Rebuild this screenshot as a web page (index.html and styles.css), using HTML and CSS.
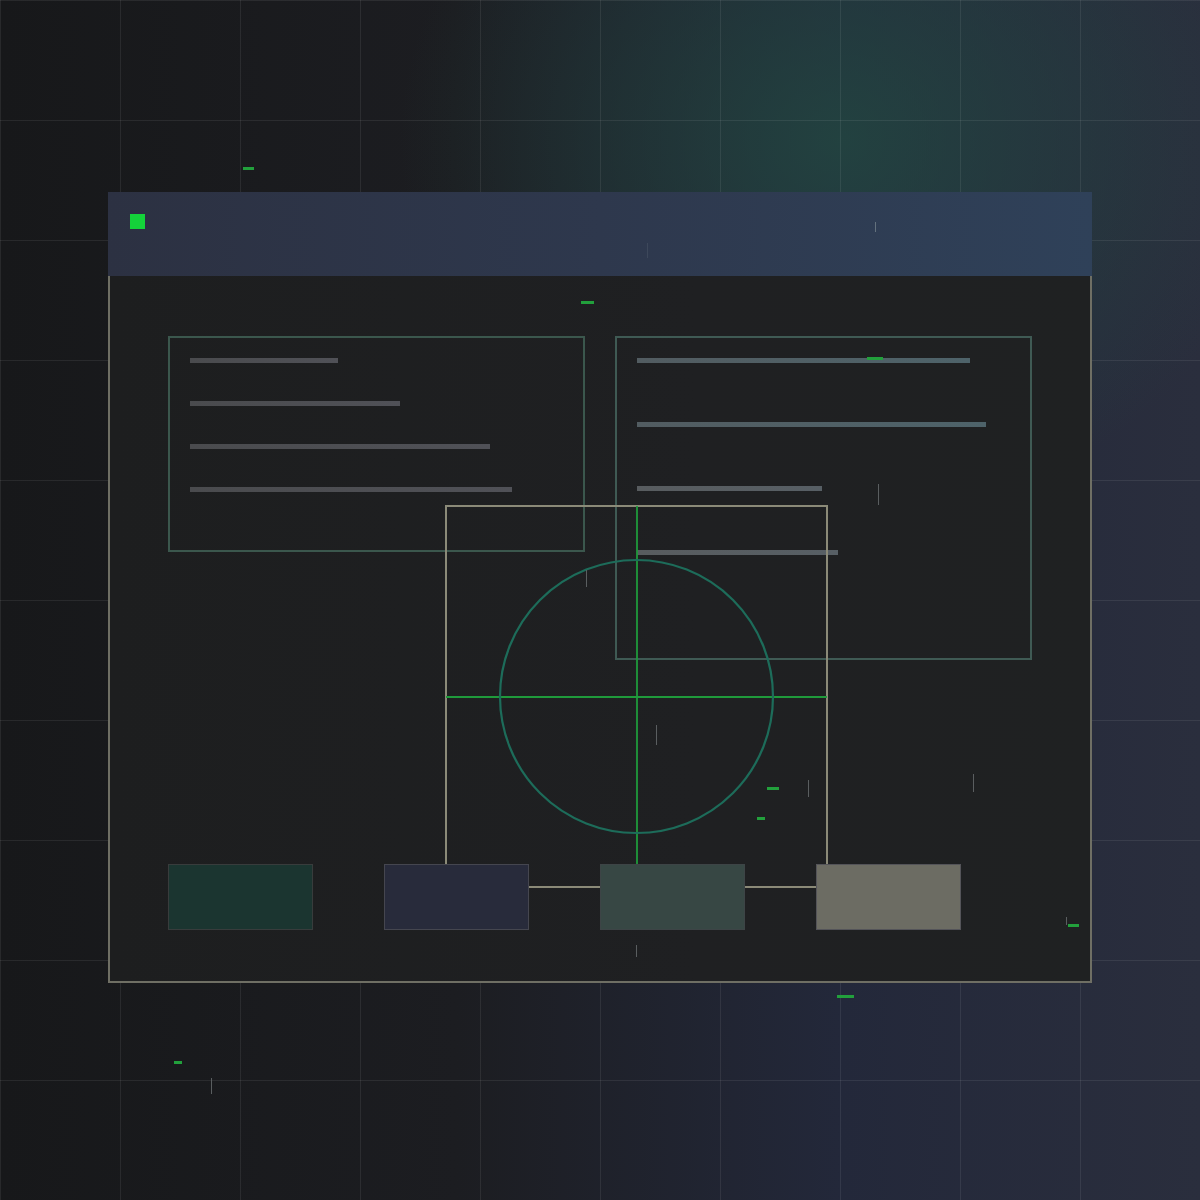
FILE: index.html
```html
<!DOCTYPE html>
<html lang="en">
<head>
<meta charset="utf-8">
<title>Wireframe</title>
<link rel="stylesheet" href="styles.css">
</head>
<body>
<div class="stage">
  <div class="window">
    <div class="window-header">
      <span class="status-dot"></span>
    </div>
    <div class="window-body">
      <div class="cards">
        <div class="card card-left">
          <span class="bar bar-a" style="width:148px"></span>
          <span class="bar bar-a" style="width:210px"></span>
          <span class="bar bar-a" style="width:300px"></span>
          <span class="bar bar-a" style="width:322px"></span>
        </div>
        <div class="card card-right">
          <span class="bar bar-b" style="width:333px"></span>
          <span class="bar bar-b" style="width:349px"></span>
          <span class="bar bar-c" style="width:185px"></span>
          <span class="bar bar-c" style="width:201px"></span>
        </div>
      </div>
      <div class="swatches">
        <div class="swatch swatch-1"></div>
        <div class="swatch swatch-2"></div>
        <div class="swatch swatch-3"></div>
        <div class="swatch swatch-4"></div>
      </div>
    </div>
  </div>

  <svg class="diagram" width="384" height="384" viewBox="0 0 384 384">
    <rect x="1" y="1" width="381" height="381" fill="none" stroke="#8b8a78" stroke-width="2"/>
    <line x1="192" y1="1" x2="192" y2="382" stroke="#1f9a3b" stroke-width="1.8"/>
    <line x1="1" y1="192" x2="382" y2="192" stroke="#1f9a3b" stroke-width="1.8"/>
    <circle cx="191.5" cy="191.5" r="136.5" fill="none" stroke="#1d6c5a" stroke-width="2.2"/>
  </svg>

  <span class="dash" style="left:243px;top:167px;width:11px"></span>
  <span class="dash" style="left:581px;top:301px;width:13px"></span>
  <span class="dash" style="left:867px;top:357px;width:16px"></span>
  <span class="dash" style="left:767px;top:787px;width:12px"></span>
  <span class="dash" style="left:757px;top:817px;width:8px"></span>
  <span class="dash" style="left:1068px;top:924px;width:11px"></span>
  <span class="dash" style="left:837px;top:995px;width:17px"></span>
  <span class="dash" style="left:174px;top:1061px;width:8px"></span>

  <span class="tick tick-faint" style="left:647px;top:243px;height:15px"></span>
  <span class="tick tick-light" style="left:875px;top:222px;height:10px"></span>
  <span class="tick" style="left:878px;top:484px;height:21px"></span>
  <span class="tick" style="left:586px;top:570px;height:17px"></span>
  <span class="tick" style="left:656px;top:725px;height:20px"></span>
  <span class="tick" style="left:808px;top:780px;height:17px"></span>
  <span class="tick" style="left:973px;top:774px;height:18px"></span>
  <span class="tick" style="left:1066px;top:917px;height:8px"></span>
  <span class="tick" style="left:636px;top:945px;height:12px"></span>
  <span class="tick" style="left:211px;top:1078px;height:16px"></span>
</div>
</body>
</html>
```

FILE: styles.css
```css
html, body {
  margin: 0;
  padding: 0;
}

body {
  width: 1200px;
  height: 1200px;
  overflow: hidden;
  font-family: "Liberation Sans", Arial, sans-serif;
}

.stage {
  position: relative;
  width: 1200px;
  height: 1200px;
  box-sizing: border-box;
  padding: 192px 0 0 108px;
  background-color: #1b1c1f;
  background-image:
    linear-gradient(90deg, rgba(255,255,255,0.075) 1px, transparent 1px),
    linear-gradient(180deg, rgba(255,255,255,0.075) 1px, transparent 1px),
    radial-gradient(ellipse 440px 380px at 840px 140px, rgba(34,74,66,0.75), rgba(34,74,66,0) 100%),
    linear-gradient(90deg, #17181a 0%, #1c1d21 38%, #23283a 70%, #2a2e3d 100%);
  background-size: 120px 120px, 120px 120px, 100% 100%, 100% 100%;
  background-position: 0 0, 0 0, 0 0, 0 0;
}

.window {
  width: 984px;
}

.window-header {
  height: 84px;
  box-sizing: border-box;
  padding: 22px 0 0 22px;
  background: linear-gradient(90deg, #2c3142 0%, #2e384d 50%, #2f4159 100%);
}

.status-dot {
  display: block;
  width: 15px;
  height: 15px;
  background: #14d33a;
}

.window-body {
  height: 707px;
  box-sizing: border-box;
  border: 2px solid #6f6f64;
  border-top: none;
  padding: 60px 0 0 58px;
  background: linear-gradient(90deg, #1d1e1f 0%, #1f2022 60%, #1f2122 100%);
}

.cards {
  display: flex;
  align-items: flex-start;
  gap: 30px;
}

.card {
  width: 417px;
  box-sizing: border-box;
  border: 2px solid #3b574d;
  padding: 20px 0 0 20px;
  display: flex;
  flex-direction: column;
}

.card-left {
  height: 216px;
  gap: 38px;
}

.card-right {
  height: 324px;
  gap: 59px;
  border-color: #3f5a54;
}

.bar {
  display: block;
  height: 5px;
}

.bar-a {
  background: linear-gradient(90deg, #4a4b4e, #505157);
}

.bar-b {
  background: linear-gradient(90deg, #525c61, #4e636a);
}

.bar-c {
  background: linear-gradient(90deg, #585c5f, #575f65);
}

.swatches {
  display: flex;
  gap: 71px;
  margin-top: 204px;
}

.swatch {
  position: relative;
  z-index: 2;
  width: 145px;
  height: 66px;
  box-sizing: border-box;
  border: 1px solid #3b3d3e;
}

.swatch-1 {
  background: #1b3530;
  border-color: #383c3c;
}

.swatch-2 {
  background: #282b3b;
  border-color: #45464f;
}

.swatch-3 {
  background: #374744;
  border-color: #3d4446;
}

.swatch-4 {
  background: #6c6c63;
  border-color: #545459;
}

.diagram {
  position: absolute;
  left: 445px;
  top: 505px;
  z-index: 1;
}

.dash {
  position: absolute;
  height: 3px;
  background: #22a03c;
  z-index: 3;
}

.tick {
  position: absolute;
  width: 1px;
  background: #5a5e60;
  z-index: 3;
}

.tick-faint {
  background: #3d485b;
}

.tick-light {
  background: #63717d;
}
```
